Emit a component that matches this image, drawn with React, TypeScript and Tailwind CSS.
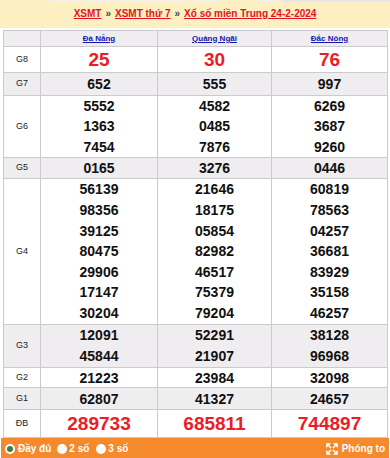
import React from 'react';

type Row = {
  label: string;
  values: string[][];
  h: string;
  lead: string;
  big?: boolean;
};

const provinces = ['Đà Nẵng', 'Quảng Ngãi', 'Đắc Nông'];

const rows: Row[] = [
  { label: 'G8', values: [['25'], ['30'], ['76']], h: 'h-[26px]', lead: 'leading-[24px]', big: true },
  { label: 'G7', values: [['652'], ['555'], ['997']], h: 'h-[23px]', lead: 'leading-[20px]' },
  {
    label: 'G6',
    values: [
      ['5552', '1363', '7454'],
      ['4582', '0485', '7876'],
      ['6269', '3687', '9260'],
    ],
    h: 'h-[62px]',
    lead: 'leading-[20.3px]',
  },
  { label: 'G5', values: [['0165'], ['3276'], ['0446']], h: 'h-[21px]', lead: 'leading-[19px]' },
  {
    label: 'G4',
    values: [
      ['56139', '98356', '39125', '80475', '29906', '17147', '30204'],
      ['21646', '18175', '05854', '82982', '46517', '75379', '79204'],
      ['60819', '78563', '04257', '36681', '83929', '35158', '46257'],
    ],
    h: 'h-[146px]',
    lead: 'leading-[20.6px]',
  },
  {
    label: 'G3',
    values: [
      ['12091', '45844'],
      ['52291', '21907'],
      ['38128', '96968'],
    ],
    h: 'h-[43px]',
    lead: 'leading-[21px]',
  },
  { label: 'G2', values: [['21223'], ['23984'], ['32098']], h: 'h-[20px]', lead: 'leading-[18px]' },
  { label: 'G1', values: [['62807'], ['41327'], ['24657']], h: 'h-[22px]', lead: 'leading-[20px]' },
  { label: 'ĐB', values: [['289733'], ['685811'], ['744897']], h: 'h-[28px]', lead: 'leading-[26px]', big: true },
];

function Dot({ active }: { active?: boolean }) {
  return (
    <span className="inline-flex h-[10px] w-[10px] items-center justify-center rounded-full bg-white">
      {active && <span className="h-[6px] w-[6px] rounded-full bg-[#3f7a4a]" />}
    </span>
  );
}

// four outward arrows, like the "zoom" glyph on the bar
function ExpandIcon() {
  return (
    <svg width="12" height="12" viewBox="0 0 12 12" fill="white" stroke="white" strokeWidth="1.6">
      <path d="M2.5 2.5 L5 5 M9.5 2.5 L7 5 M2.5 9.5 L5 7 M9.5 9.5 L7 7" fill="none" />
      <path d="M0.5 0.5 H4.5 L0.5 4.5 Z M11.5 0.5 H7.5 L11.5 4.5 Z M0.5 11.5 H4.5 L0.5 7.5 Z M11.5 11.5 H7.5 L11.5 7.5 Z" strokeWidth="0.6" />
    </svg>
  );
}

export default function App() {
  return (
    <div className="w-[390px] h-[458px] bg-white overflow-hidden" style={{ fontFamily: '"Liberation Sans", Arial, sans-serif' }}>
      {/* heading band */}
      <div className="bg-[#fcf0c2] h-[28px] flex flex-col">
        <div className="flex h-[2px]">
          <div className="w-[50px]" />
          <div className="w-[32px] bg-[#f3f0ea]" />
          <div className="w-[2px]" />
          <div className="w-[33px] bg-[#f3f0ea]" />
          <div className="w-[2px]" />
          <div className="w-[66px] bg-[#f3f0ea]" />
          <div className="w-[3px]" />
          <div className="w-[32px] bg-[#f3f0ea]" />
          <div className="w-[38px]" />
          <div className="w-[20px] bg-[#f3f0ea]" />
          <div className="w-[4px]" />
          <div className="flex-1 bg-[#e8e6ea]" />
        </div>
        <div className="flex-1 flex items-center justify-center text-[10px] font-bold text-[#444] pb-[3px]">
          <a className="text-[#e8101c] underline">XSMT</a>
          <span className="mx-[4px]">»</span>
          <a className="text-[#e8101c] underline">XSMT thứ 7</a>
          <span className="mx-[4px]">»</span>
          <a className="text-[#e8101c] underline">Xổ số miền Trung 24-2-2024</a>
        </div>
      </div>

      <div className="px-[3px] pt-[2px]">
        <table className="w-[384px] table-fixed border-collapse">
          <colgroup>
            <col className="w-[37px]" />
            <col className="w-[117px]" />
            <col className="w-[114px]" />
            <col className="w-[116px]" />
          </colgroup>
          <tbody>
            <tr className="h-[16px] bg-[#efedef]">
              <td className="border border-[#cbcbcb]" />
              {provinces.map((p) => (
                <td key={p} className="border border-[#cbcbcb] text-center text-[8px] font-bold leading-[12px]">
                  <a className="text-[#1515b0] underline">{p}</a>
                </td>
              ))}
            </tr>
            {rows.map((r, i) => (
              <tr key={r.label} className={`${r.h} ${i % 2 === 1 ? 'bg-[#efedef]' : 'bg-white'}`}>
                <td className="border border-[#cbcbcb] text-center text-[9px] text-[#222] p-0">{r.label}</td>
                {r.values.map((col, j) => (
                  <td key={j} className="border border-[#cbcbcb] text-center p-0 align-middle">
                    {col.map((v) => (
                      <div
                        key={v}
                        className={`${r.lead} font-bold ${
                          r.big ? 'text-[#ed1c24] text-[19px]' : 'text-[#111] text-[14px]'
                        }`}
                      >
                        {v}
                      </div>
                    ))}
                  </td>
                ))}
              </tr>
            ))}
          </tbody>
        </table>
      </div>

      {/* footer bar */}
      <div className="mx-[1px] h-[21px] bg-[#f58a2c] flex items-center pl-[4px] pr-[4px] text-white text-[10px] font-bold">
        <div className="flex items-center gap-[3px]">
          <Dot active />
          <span>Đầy đủ</span>
        </div>
        <div className="flex items-center gap-[2px] ml-[6px]">
          <Dot />
          <span>2 số</span>
        </div>
        <div className="flex items-center gap-[2px] ml-[7px]">
          <Dot />
          <span>3 số</span>
        </div>
        <div className="ml-auto flex items-center gap-[4px]">
          <ExpandIcon />
          <span>Phóng to</span>
        </div>
      </div>
    </div>
  );
}
